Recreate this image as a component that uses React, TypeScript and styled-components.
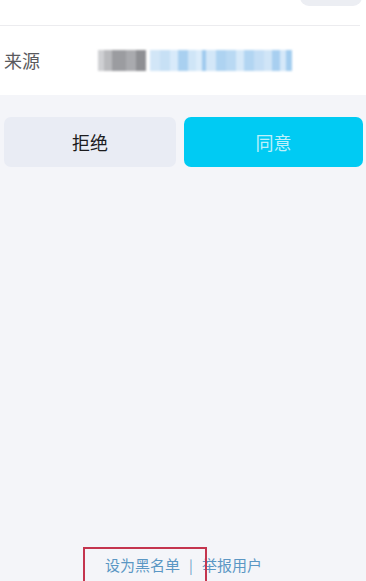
import React from "react";
import styled, { createGlobalStyle } from "styled-components";

const Global = createGlobalStyle`
  html, body { margin: 0; padding: 0; background: #f4f5f9; }
  body { font-family: "Noto Sans CJK SC", "Noto Sans", sans-serif; }
  #root { width: 366px; height: 581px; overflow: hidden; }
`;

const Page = styled.div`
  width: 366px;
  height: 581px;
  display: flex;
  flex-direction: column;
  background: #f4f5f9;
  position: relative;
  overflow: hidden;
`;

const Card = styled.section`
  background: #ffffff;
  display: flex;
  flex-direction: column;
`;

const TopRow = styled.div`
  height: 25px;
  display: flex;
  justify-content: flex-end;
  align-items: flex-start;
  border-bottom: 1px solid #ececef;
  margin-right: 6px;
`;

const Pill = styled.div`
  width: 62px;
  height: 18px;
  margin-top: -12px;
  margin-right: -2px;
  border-radius: 9px;
  background: #eceef3;
`;

const InfoRow = styled.div`
  height: 69px;
  display: flex;
  align-items: center;
  padding-left: 4px;
`;

const Label = styled.span`
  width: 94px;
  font-size: 18px;
  color: #5a5a5e;
  margin-top: -2px;
`;

const Blur = styled.div`
  display: flex;
  height: 21px;
  filter: blur(1.3px);
  margin-top: -1px;
`;

const Pix = styled.span<{ $c: string; $w: number }>`
  display: block;
  width: ${(p) => p.$w}px;
  height: 100%;
  background: ${(p) => p.$c};
`;

const Actions = styled.div`
  display: grid;
  grid-template-columns: 172px 179px;
  column-gap: 8px;
  padding: 22px 0 0 4px;
`;

const Btn = styled.button<{ $primary?: boolean }>`
  height: 50px;
  border: none;
  border-radius: 7px;
  font-family: inherit;
  font-size: 18px;
  background: ${(p) => (p.$primary ? "#00cbf3" : "#e9ecf4")};
  color: ${(p) => (p.$primary ? "#bdf0fb" : "#1c1c1e")};
  display: flex;
  align-items: center;
  justify-content: center;
  padding: 0;
`;

const Spacer = styled.div`
  flex: 1;
`;

const Footer = styled.div`
  display: flex;
  justify-content: center;
  align-items: center;
  gap: 9px;
  font-size: 15px;
  color: #5b97c4;
  padding-bottom: 6px;
  padding-left: 1px;
`;

const Sep = styled.span`
  color: #6a9fc7;
  font-size: 14px;
`;

const Mark = styled.div`
  position: absolute;
  left: 83px;
  top: 547px;
  width: 120px;
  height: 40px;
  border: 2px solid #c4354f;
`;

const pixels: [string, number][] = [
  ["#cfd0d3", 6],
  ["#b9babd", 8],
  ["#9b9ca0", 14],
  ["#a9aaae", 10],
  ["#8e8f93", 10],
  ["#ffffff", 4],
  ["#d2e6f7", 10],
  ["#c7e0f5", 10],
  ["#d8eafa", 8],
  ["#a9d0f0", 10],
  ["#cfe5f7", 8],
  ["#dbecfa", 6],
  ["#9fcaee", 4],
  ["#d3e7f8", 10],
  ["#aed3f1", 10],
  ["#b9d9f3", 10],
  ["#d6e9f9", 8],
  ["#b2d5f2", 10],
  ["#c4def5", 10],
  ["#d0e5f7", 8],
  ["#a8cff0", 8],
  ["#d5e8f9", 6],
  ["#a3cdef", 6],
];

export default function App() {
  return (
    <>
      <Global />
      <Page>
        <Card>
          <TopRow>
            <Pill />
          </TopRow>
          <InfoRow>
            <Label>来源</Label>
            <Blur>
              {pixels.map(([c, w], i) => (
                <Pix key={i} $c={c} $w={w} />
              ))}
            </Blur>
          </InfoRow>
        </Card>
        <Actions>
          <Btn>拒绝</Btn>
          <Btn $primary>同意</Btn>
        </Actions>
        <Spacer />
        <Footer>
          <span>设为黑名单</span>
          <Sep>|</Sep>
          <span>举报用户</span>
        </Footer>
        <Mark />
      </Page>
    </>
  );
}
